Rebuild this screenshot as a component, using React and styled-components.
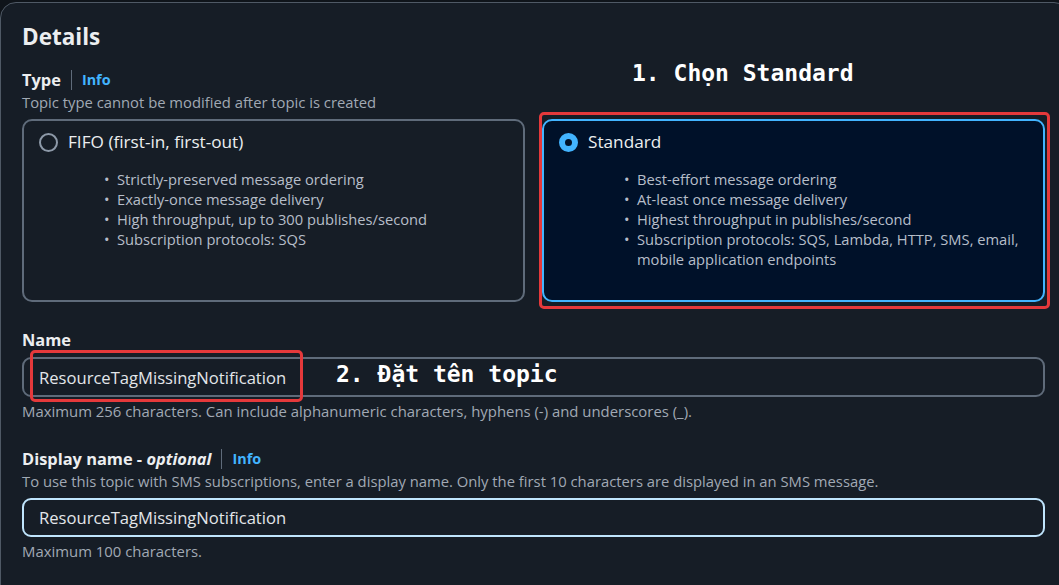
import React from "react";
import styled, { createGlobalStyle } from "styled-components";

const GlobalStyle = createGlobalStyle`
  html, body {
    margin: 0;
    padding: 0;
    background: #0f141a;
    overflow: hidden;
  }
  body {
    font-family: "Open Sans", "Noto Sans", Arial, sans-serif;
    -webkit-font-smoothing: antialiased;
  }
  * { box-sizing: border-box; }
`;

const Page = styled.div`
  position: relative;
  width: 1059px;
  height: 585px;
  padding-top: 2px;
  overflow: hidden;
`;

const Container = styled.section`
  width: 1070px;
  min-height: 600px;
  background: #161d26;
  border: 1px solid #4f5965;
  border-radius: 16px;
  padding: 19px 23px 0 21px;
`;

const Heading = styled.h2`
  margin: 0;
  font-size: 22.5px;
  line-height: 30px;
  font-weight: 700;
  color: #eceef0;
`;

const Field = styled.div`
  margin-top: ${(p) => p.$mt || 0}px;
  width: 1023px;
`;

const LabelRow = styled.div`
  display: flex;
  align-items: center;
  height: 22px;
  line-height: 22px;
`;

const Label = styled.span`
  font-size: 16.4px;
  font-weight: 700;
  color: #eceef0;
  em {
    font-style: italic;
  }
`;

const Divider = styled.span`
  width: 1px;
  height: 20px;
  background: #5f6b7a;
  margin: 0 10px 0 10px;
`;

const InfoLink = styled.a`
  font-size: 14.4px;
  font-weight: 700;
  color: #42b4ff;
  text-decoration: none;
`;

const Description = styled.div`
  font-size: 14.8px;
  line-height: ${(p) => p.$lh || 22}px;
  color: #a1a9b4;
  margin-top: ${(p) => p.$mt || 0}px;
`;

const TileGrid = styled.div`
  display: grid;
  grid-template-columns: 1fr 1fr;
  column-gap: 17px;
  margin-top: 6px;
`;

const Tile = styled.div`
  min-height: 183px;
  border: 2px solid ${(p) => (p.$checked ? "#42b4ff" : "#5f6b7a")};
  background: ${(p) => (p.$checked ? "#001129" : "#161d26")};
  border-radius: 10px;
  padding: 10px 14px 10px 15px;
`;

const TileHead = styled.div`
  display: flex;
  align-items: center;
  gap: 10px;
  height: 22px;
`;

const Radio = styled.span`
  width: 19px;
  height: 19px;
  border-radius: 50%;
  flex: none;
  border: ${(p) => (p.$checked ? "6px solid #42b4ff" : "2px solid #8d99a8")};
  background: ${(p) => (p.$checked ? "#001129" : "transparent")};
`;

const TileTitle = styled.span`
  font-size: 17.2px;
  line-height: 22px;
  color: #eceef0;
`;

const List = styled.ul`
  list-style: none;
  margin: 16px 0 0 0;
  padding: 0 0 0 78px;
`;

const Item = styled.li`
  position: relative;
  font-size: 14.7px;
  line-height: 20px;
  color: #b6bec9;
  &::before {
    content: "•";
    position: absolute;
    left: -13px;
    top: 0;
    color: #b6bec9;
  }
`;

const Input = styled.div`
  margin-top: 6px;
  height: ${(p) => p.$h || 40}px;
  border: 2px solid ${(p) => (p.$focused ? "#bfe4fc" : "#5f6b7a")};
  border-radius: 9px;
  padding: 0 15px;
  display: flex;
  align-items: center;
  font-size: 16.6px;
  color: #e3e6ea;
`;

const Helper = styled.div`
  margin-top: 4px;
  font-size: 14.9px;
  line-height: 20px;
  color: #a1a9b4;
`;

const RedBox = styled.div`
  position: absolute;
  border: 3px solid #e5393b;
  border-radius: 5px;
  pointer-events: none;
`;

const Note = styled.div`
  position: absolute;
  font-family: "DejaVu Sans Mono", "Liberation Mono", monospace;
  font-weight: 700;
  font-size: 23px;
  line-height: 28px;
  color: #ffffff;
  white-space: nowrap;
`;

const fifo = [
  "Strictly-preserved message ordering",
  "Exactly-once message delivery",
  "High throughput, up to 300 publishes/second",
  "Subscription protocols: SQS",
];

const standard = [
  "Best-effort message ordering",
  "At-least once message delivery",
  "Highest throughput in publishes/second",
  "Subscription protocols: SQS, Lambda, HTTP, SMS, email, mobile application endpoints",
];

export default function App() {
  return (
    <>
      <GlobalStyle />
      <Page>
        <Container>
          <Heading>Details</Heading>

          <Field $mt={17}>
            <LabelRow>
              <Label>Type</Label>
              <Divider />
              <InfoLink>Info</InfoLink>
            </LabelRow>
            <Description>Topic type cannot be modified after topic is created</Description>
            <TileGrid>
              <Tile>
                <TileHead>
                  <Radio />
                  <TileTitle>FIFO (first-in, first-out)</TileTitle>
                </TileHead>
                <List>
                  {fifo.map((t) => (
                    <Item key={t}>{t}</Item>
                  ))}
                </List>
              </Tile>
              <Tile $checked>
                <TileHead>
                  <Radio $checked />
                  <TileTitle>Standard</TileTitle>
                </TileHead>
                <List>
                  {standard.map((t) => (
                    <Item key={t}>{t}</Item>
                  ))}
                </List>
              </Tile>
            </TileGrid>
          </Field>

          <Field $mt={27}>
            <LabelRow>
              <Label>Name</Label>
            </LabelRow>
            <Input>ResourceTagMissingNotification</Input>
            <Helper>
              Maximum 256 characters. Can include alphanumeric characters, hyphens (-) and underscores (_).
            </Helper>
          </Field>

          <Field $mt={27}>
            <LabelRow>
              <Label>
                Display name - <em>optional</em>
              </Label>
              <Divider />
              <InfoLink>Info</InfoLink>
            </LabelRow>
            <Description>
              To use this topic with SMS subscriptions, enter a display name. Only the first 10 characters are displayed in an SMS message.
            </Description>
            <Input $focused $h={39}>ResourceTagMissingNotification</Input>
            <Helper>Maximum 100 characters.</Helper>
          </Field>
        </Container>

        <Note style={{ left: 632, top: 59 }}>1. Chọn Standard</Note>
        <RedBox style={{ left: 539, top: 112, width: 511, height: 197 }} />
        <RedBox style={{ left: 30, top: 350, width: 273, height: 52 }} />
        <Note style={{ left: 336, top: 360 }}>2. Đặt tên topic</Note>
      </Page>
    </>
  );
}
